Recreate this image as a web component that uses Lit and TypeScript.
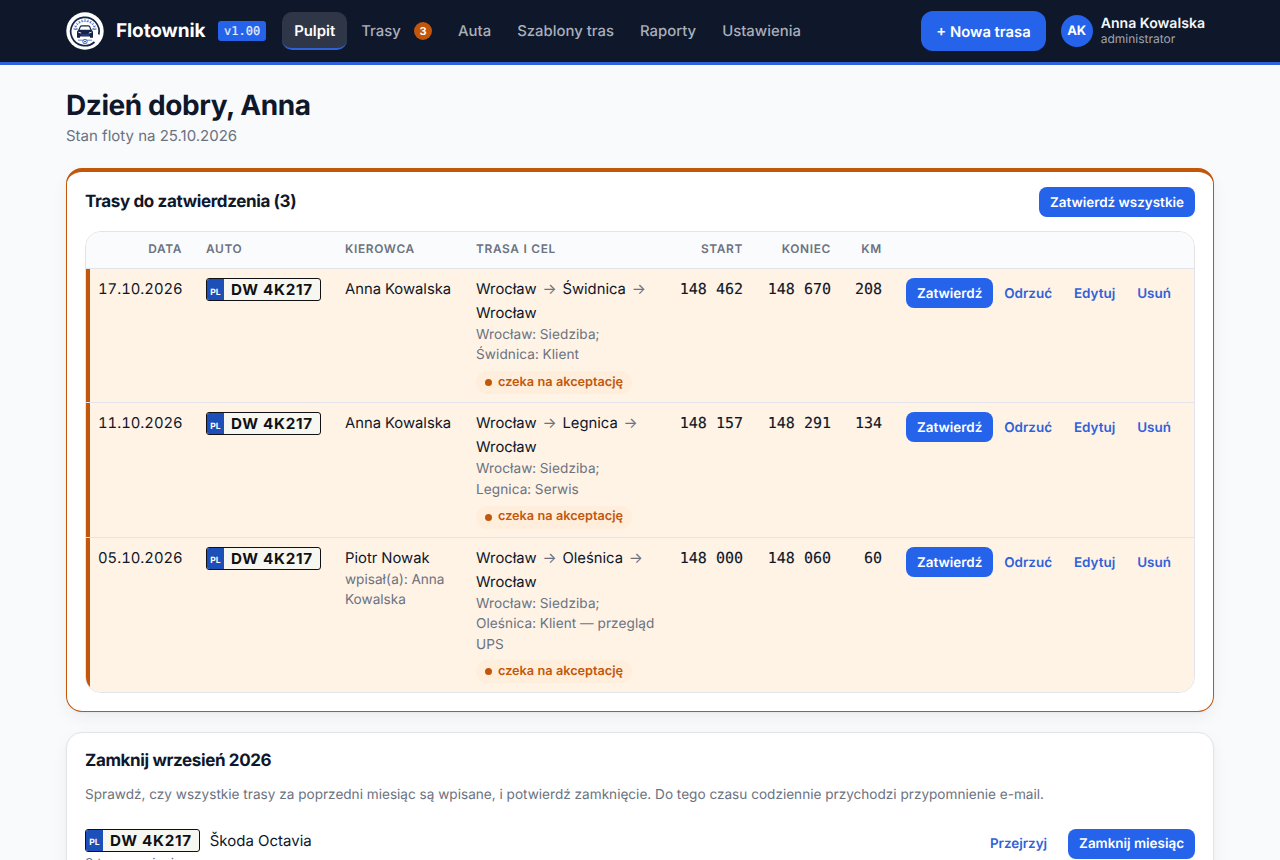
import { LitElement, html, css, svg, nothing } from 'lit';
import { customElement, property } from 'lit/decorators.js';

interface Trip {
  date: string;
  plate: string;
  driver: string;
  author?: string;
  stops: string[];
  purposes: string[];
  start: string;
  end: string;
  km: string;
}

const TRIPS: Trip[] = [
  {
    date: '17.10.2026',
    plate: 'DW 4K217',
    driver: 'Anna Kowalska',
    stops: ['Wrocław', 'Świdnica', 'Wrocław'],
    purposes: ['Wrocław: Siedziba;', 'Świdnica: Klient'],
    start: '148 462',
    end: '148 670',
    km: '208'
  },
  {
    date: '11.10.2026',
    plate: 'DW 4K217',
    driver: 'Anna Kowalska',
    stops: ['Wrocław', 'Legnica', 'Wrocław'],
    purposes: ['Wrocław: Siedziba;', 'Legnica: Serwis'],
    start: '148 157',
    end: '148 291',
    km: '134'
  },
  {
    date: '05.10.2026',
    plate: 'DW 4K217',
    driver: 'Piotr Nowak',
    author: 'Anna Kowalska',
    stops: ['Wrocław', 'Oleśnica', 'Wrocław'],
    purposes: ['Wrocław: Siedziba;', 'Oleśnica: Klient — przegląd UPS'],
    start: '148 000',
    end: '148 060',
    km: '60'
  }
];

const NAV = [
  { label: 'Pulpit', active: true },
  { label: 'Trasy', count: 3 },
  { label: 'Auta' },
  { label: 'Szablony tras' },
  { label: 'Raporty' },
  { label: 'Ustawienia' }
];

const buttonStyles = css`
  button {
    display: inline-flex;
    align-items: center;
    justify-content: center;
    box-sizing: border-box;
    height: 30px;
    padding: 3px 11px 0;
    border: 0;
    border-radius: 8px;
    background: #2563eb;
    color: #fff;
    font: 600 13.44px/1 Inter, sans-serif;
    text-rendering: geometricPrecision;
    white-space: nowrap;
  }
  button.ghost {
    background: none;
    color: #2f62d9;
  }
`;

@customElement('license-plate')
export class LicensePlate extends LitElement {
  static styles = css`
    :host {
      display: inline-flex;
      box-sizing: border-box;
      height: 23px;
      border: 1px solid #111;
      border-radius: 3px;
      overflow: hidden;
      background: #f7f7f2;
      color: #111;
      font-variant-numeric: normal;
      vertical-align: top;
    }
    .country {
      display: flex;
      align-items: flex-end;
      justify-content: center;
      box-sizing: border-box;
      width: 17px;
      padding-bottom: 3px;
      background: #1d4fb8;
      color: #fff;
      font-size: 8.5px;
      font-weight: 700;
      line-height: 1;
    }
    .number {
      padding: 0 7px;
      font-size: 15.2px;
      font-weight: 700;
      line-height: 22px;
      letter-spacing: 0.7px;
      white-space: nowrap;
    }
  `;

  @property() number = '';

  render() {
    return html`<span class="country">PL</span><span class="number">${this.number}</span>`;
  }
}

@customElement('app-logo')
export class AppLogo extends LitElement {
  static styles = css`
    :host, svg {
      display: block;
      width: 38px;
      height: 38px;
    }
  `;

  render() {
    const ticks = [-80, -64, -48, -32, -16, 0, 16, 32, 48, 64, 80];
    return html`
      <svg viewBox="0 0 38 38">
        <circle cx="19" cy="19" r="18.7" fill="#fff" />
        <path d="M28.5 30 A14.2 14.2 0 1 1 32.8 22.5" fill="none" stroke="#14234a" stroke-width="1.7" />
        <path d="M8.6 17 A10.8 10.8 0 0 1 29.4 17" fill="none" stroke="#6f8fd0" stroke-width="0.5" />
        ${ticks.map(
          a => svg`<path d="M19 7.2v2.6" stroke="#3b67c4" stroke-width="0.9" transform="rotate(${a} 19 19)" />`
        )}
        <path d="M12.8 18.2 L14.4 14.6 Q14.8 13.8 15.8 13.8 H22.2 Q23.2 13.8 23.6 14.6 L25.2 18.2"
          fill="none" stroke="#14234a" stroke-width="1.2" />
        <path d="M12.4 17.8 H25.6 L27 19.6 V25.8 H24 V24.4 H14 V25.8 H11 V19.6Z" fill="#14234a" />
        <path d="M12.4 20.2 l2.8 .9 M25.6 20.2 l-2.8 .9" stroke="#fff" stroke-width="0.9" />
        <path d="M15 23h8" stroke="#3b67c4" stroke-width="0.7" />
        <path d="M9.8 17h1.8 M26.4 17h1.8" stroke="#14234a" stroke-width="1.2" />
        <path d="M12 28.2h14" stroke="#3b67c4" stroke-width="0.8" />
        <circle cx="19" cy="29.6" r="2.2" fill="#fff" stroke="#3b67c4" stroke-width="1" />
        <circle cx="19" cy="29.6" r="0.8" fill="#14234a" />
      </svg>`;
  }
}

@customElement('app-header')
export class AppHeader extends LitElement {
  static styles = [
    buttonStyles,
    css`
    :host {
      display: block;
      background: #0f172a;
      border-bottom: 3px solid #2f62d9;
    }
    .inner {
      display: flex;
      align-items: center;
      box-sizing: border-box;
      width: 1180px;
      height: 62px;
      margin: 0 auto;
      padding: 0 25px 0 16px;
    }
    .brand {
      width: 90px;
      margin-left: 12px;
      color: #fff;
      font-size: 19px;
      font-weight: 700;
      letter-spacing: -0.1px;
    }
    .version {
      margin: 0 16px 0 12px;
      padding: 0 6px;
      border-radius: 3px;
      background: #2563eb;
      color: #e8effd;
      font: 12px/20px "DejaVu Sans Mono", monospace;
      -webkit-text-stroke: 0.2px;
    }
    nav {
      display: flex;
      gap: 2px;
      flex: 1;
    }
    .item {
      display: flex;
      align-items: center;
      box-sizing: border-box;
      height: 38px;
      padding: 2px 12px 0;
      border-bottom: 2px solid transparent;
      border-radius: 10px;
      color: #a9afbb;
      font-size: 14.9px;
      font-weight: 500;
      white-space: nowrap;
    }
    .item.active {
      background: #2f3647;
      border-color: #2f62d9;
      color: #fff;
      font-weight: 600;
    }
    .count {
      width: 18px;
      margin-left: 13.2px;
      border-radius: 9px;
      background: #c2570c;
      color: #fff;
      font-size: 11px;
      font-weight: 700;
      line-height: 18px;
      text-align: center;
    }
    button {
      height: 40px;
      padding: 2px 15px 0;
      border-radius: 12px;
      font-size: 14.8px;
    }
    .avatar {
      width: 32px;
      margin: 0 8px 0 15px;
      border-radius: 50%;
      background: #2563eb;
      color: #fff;
      font-size: 13px;
      font-weight: 700;
      line-height: 32px;
      text-align: center;
    }
    .user {
      padding-bottom: 1px;
      color: #f5f6f8;
      font-size: 14.1px;
      font-weight: 600;
      line-height: 17px;
    }
    .role {
      color: #a0a6b2;
      font-size: 12px;
      font-weight: 400;
      line-height: 14px;
    }
  `];

  render() {
    return html`
      <div class="inner">
        <app-logo></app-logo>
        <span class="brand">Flotownik</span>
        <span class="version">v1.00</span>
        <nav>
          ${NAV.map(
            item => html`
              <span class="item ${item.active ? 'active' : ''}">${item.label}${item.count
                ? html`<span class="count">${item.count}</span>`
                : nothing}</span>`
          )}
        </nav>
        <button>+ Nowa trasa</button>
        <span class="avatar">AK</span>
        <div class="user">
          Anna Kowalska
          <div class="role">administrator</div>
        </div>
      </div>`;
  }
}

@customElement('trips-table')
export class TripsTable extends LitElement {
  static styles = [
    buttonStyles,
    css`
    :host {
      display: block;
      border: 1px solid #e2e4e9;
      border-radius: 16px;
      overflow: hidden;
    }
    table {
      width: 100%;
      border-collapse: separate;
      border-spacing: 0;
      table-layout: fixed;
      font-size: 14.8px;
      font-variant-numeric: tabular-nums;
    }
    .c-date { width: 108px; }
    .c-car { width: 139px; }
    .c-driver { width: 131px; }
    .c-route { width: 204px; }
    .c-start { width: 87px; }
    .c-end { width: 88px; }
    .c-km { width: 51px; }
    th {
      box-sizing: border-box;
      height: 37px;
      padding: 0 12px 2px;
      border-bottom: 1px solid #e2e4e9;
      background: #fafbfd;
      color: #6b7280;
      font-size: 11.9px;
      font-weight: 600;
      line-height: 18px;
      letter-spacing: 0.65px;
      text-align: left;
      text-transform: uppercase;
    }
    td {
      padding: 9px 12px 8.2px;
      background: #fff3e6;
      line-height: 24px;
      vertical-align: top;
    }
    tr + tr td {
      border-top: 1px solid #e2e4e9;
    }
    td:first-child {
      box-shadow: inset 4px 0 #c2570c;
    }
    .num {
      text-align: right;
      white-space: nowrap;
    }
    td.num {
      padding-top: 8px;
    }
    .text {
      padding-top: 8px;
    }
    .mono {
      padding-left: 4px;
      font-family: "DejaVu Sans Mono", monospace;
      font-size: 15px;
      -webkit-text-stroke: 0.15px;
    }
    .arrow {
      margin: 0 1.8px;
      color: #6b7280;
    }
    .note {
      color: #6b7280;
      font-size: 13.6px;
      line-height: 20.4px;
    }
    .purpose {
      letter-spacing: 0.08px;
    }
    .badge {
      display: inline-flex;
      align-items: center;
      gap: 6px;
      height: 23px;
      margin-top: 5.4px;
      padding: 0 9px;
      border-radius: 12px;
      background: #ffeedb;
      color: #c2570c;
      font-size: 12.7px;
      font-weight: 600;
      vertical-align: top;
    }
    .badge::before {
      content: "";
      width: 7px;
      height: 7px;
      border-radius: 50%;
      background: #c2570c;
    }
    .actions {
      display: flex;
    }
  `];

  @property({ attribute: false }) trips: Trip[] = [];

  renderRow(trip: Trip) {
    return html`
      <tr>
        <td class="num">${trip.date}</td>
        <td><license-plate number=${trip.plate}></license-plate></td>
        <td class="text">
          ${trip.driver}
          ${trip.author ? html`<div class="note">wpisał(a): ${trip.author}</div>` : nothing}
        </td>
        <td class="text">
          ${trip.stops.map((stop, i) => html`${i ? html` <span class="arrow">→</span> ` : nothing}${stop}`)}
          ${trip.purposes.map(purpose => html`<div class="note purpose">${purpose}</div>`)}
          <span class="badge">czeka na akceptację</span>
        </td>
        <td class="num mono">${trip.start}</td>
        <td class="num mono">${trip.end}</td>
        <td class="num mono">${trip.km}</td>
        <td>
          <div class="actions">
            <button>Zatwierdź</button>
            <button class="ghost">Odrzuć</button>
            <button class="ghost">Edytuj</button>
            <button class="ghost">Usuń</button>
          </div>
        </td>
      </tr>`;
  }

  render() {
    return html`
      <table>
        <colgroup>
          <col class="c-date"><col class="c-car"><col class="c-driver"><col class="c-route">
          <col class="c-start"><col class="c-end"><col class="c-km"><col>
        </colgroup>
        <thead>
          <tr>
            <th class="num">Data</th>
            <th>Auto</th>
            <th>Kierowca</th>
            <th>Trasa i cel</th>
            <th class="num">Start</th>
            <th class="num">Koniec</th>
            <th class="num">Km</th>
            <th></th>
          </tr>
        </thead>
        <tbody>
          ${this.trips.map(trip => this.renderRow(trip))}
        </tbody>
      </table>`;
  }
}

@customElement('app-root')
export class AppRoot extends LitElement {
  static styles = [
    buttonStyles,
    css`
    :host {
      display: block;
      height: 860px;
      overflow: hidden;
      background: #f8fafc;
      color: #0f172a;
      font: 15px/24px Inter, sans-serif;
      text-rendering: geometricPrecision;
    }
    main {
      width: 1148px;
      margin: 0 auto;
      padding-top: 22px;
    }
    h1 {
      margin: 0;
      font-size: 28px;
      font-weight: 700;
      line-height: 37px;
      letter-spacing: -0.42px;
    }
    h2 {
      margin: 0;
      font-size: 17px;
      font-weight: 700;
      line-height: 30px;
      letter-spacing: -0.37px;
    }
    .subtitle {
      margin-bottom: 20px;
      color: #6b7280;
    }
    .card {
      margin-bottom: 20px;
      padding: 13px 18px 18px;
      border: 1px solid #e2e4e9;
      border-radius: 16px;
      background: #fff;
      box-shadow: 0 1px 2px rgba(15, 23, 42, 0.04), 0 6px 16px rgba(15, 23, 42, 0.05);
    }
    .card.pending {
      padding-top: 15px;
      border-color: #c2570c;
      border-top-width: 4px;
    }
    .card-head {
      display: flex;
      justify-content: space-between;
      margin-bottom: 14px;
    }
    .lead {
      margin: 8px 0 0;
      color: #6b7280;
      font-size: 13.6px;
      line-height: 22px;
    }
    .car-row {
      display: flex;
      align-items: flex-start;
      margin-top: 23px;
    }
    .car {
      flex: 1;
      line-height: 23px;
    }
    .model {
      margin-left: 10px;
    }
    .note {
      margin-top: 2px;
      color: #6b7280;
      font-size: 13.6px;
      line-height: 20.4px;
    }
    .car-row .ghost {
      margin-right: 10px;
    }
  `];

  render() {
    return html`
      <app-header></app-header>
      <main>
        <h1>Dzień dobry, Anna</h1>
        <div class="subtitle">Stan floty na 25.10.2026</div>
        <section class="card pending">
          <div class="card-head">
            <h2>Trasy do zatwierdzenia (3)</h2>
            <button>Zatwierdź wszystkie</button>
          </div>
          <trips-table .trips=${TRIPS}></trips-table>
        </section>
        <section class="card">
          <h2>Zamknij wrzesień 2026</h2>
          <p class="lead">
            Sprawdź, czy wszystkie trasy za poprzedni miesiąc są wpisane, i potwierdź zamknięcie. Do tego czasu codziennie przychodzi przypomnienie e-mail.
          </p>
          <div class="car-row">
            <div class="car">
              <license-plate number="DW 4K217"></license-plate><span class="model">Škoda Octavia</span>
              <div class="note">8 tras w miesiącu</div>
            </div>
            <button class="ghost">Przejrzyj</button>
            <button>Zamknij miesiąc</button>
          </div>
        </section>
      </main>`;
  }
}
